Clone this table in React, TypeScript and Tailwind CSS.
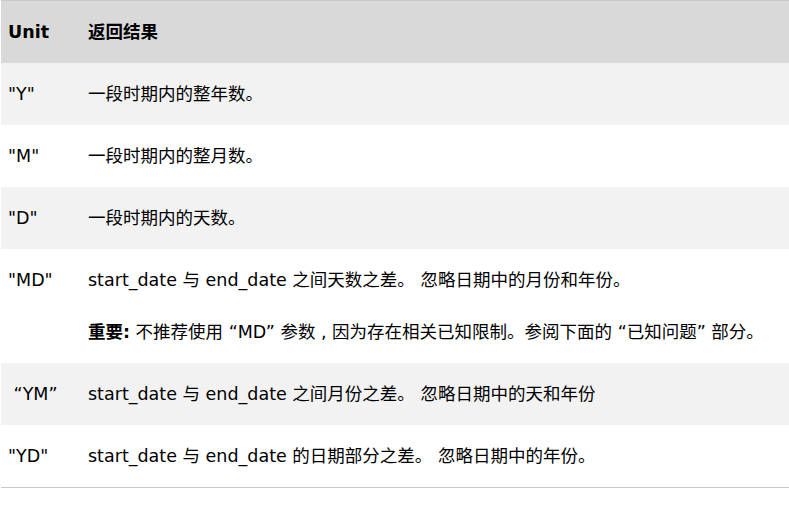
import React from "react";

const font = { fontFamily: '"DejaVu Sans", "Noto Sans CJK SC", sans-serif' };

type Row = { unit: string; text: React.ReactNode; extra?: React.ReactNode };

const rows: Row[] = [
	{ unit: '"Y"', text: "一段时期内的整年数。" },
	{ unit: '"M"', text: "一段时期内的整月数。" },
	{ unit: '"D"', text: "一段时期内的天数。" },
	{
		unit: '"MD"',
		text: "start_date 与 end_date 之间天数之差。 忽略日期中的月份和年份。",
		extra: (
			<>
				<strong className="font-bold">重要:</strong> 不推荐使用 “MD” 参数 , 因为存在相关已知限制。参阅下面的 “已知问题” 部分。
			</>
		),
	},
	{ unit: "\u00a0“YM”", text: "start_date 与 end_date 之间月份之差。 忽略日期中的天和年份" },
	{ unit: '"YD"', text: "start_date 与 end_date 的日期部分之差。 忽略日期中的年份。" },
];

export default function App() {
	return (
		<div className="w-[789px] h-[515px] bg-white pl-px" style={font}>
			<div className="border-t border-b border-[#c8c8c8] text-[17.5px] text-black">
				{/* 表头 */}
				<div className="grid grid-cols-[87px_1fr] h-[62px] items-center bg-[#d9d9d9] font-bold pt-px">
					<div className="pl-[7px]">Unit</div>
					<div>返回结果</div>
				</div>

				{rows.map((r, i) => (
					<div key={i} className={`grid grid-cols-[87px_1fr] py-[19px] leading-[24px] ${i % 2 === 0 ? "bg-[#f2f2f2]" : "bg-white"}`}>
						<div className="pl-[7px] whitespace-pre">{r.unit}</div>
						<div className="flex flex-col gap-[28px]">
							<div className="whitespace-nowrap">{r.text}</div>
							{r.extra && <div className="whitespace-nowrap">{r.extra}</div>}
						</div>
					</div>
				))}
			</div>
		</div>
	);
}
